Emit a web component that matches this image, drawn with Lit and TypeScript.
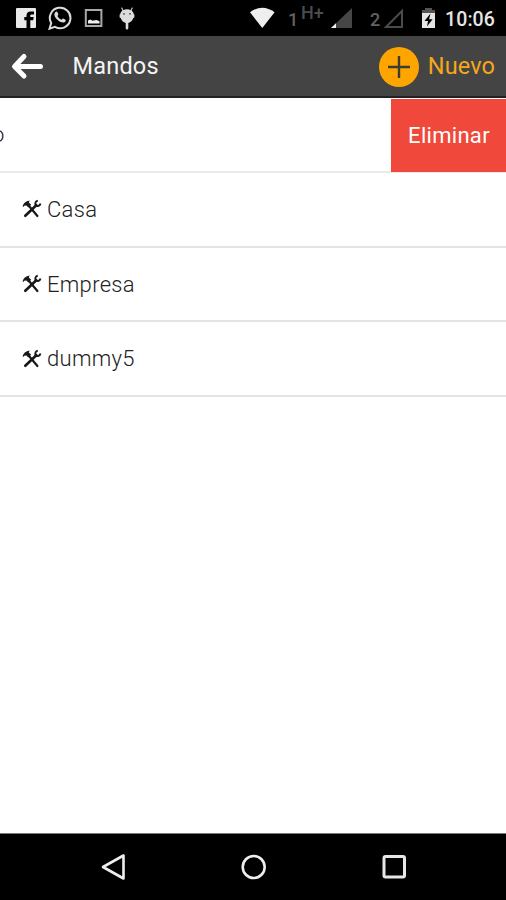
import { LitElement, html, css, svg } from "lit";
import { customElement, property } from "lit/decorators.js";

@customElement("status-bar")
class StatusBar extends LitElement {
  static styles = css`
    :host { display: flex; align-items: flex-start; justify-content: space-between; height: 36px; background: #000; color: #e6e6e6; flex: none; }
    .side { display: flex; height: 36px; }
    .left { padding-left: 16px; gap: 12px; }
    .right { padding-right: 11px; }
    svg { display: block; flex: none; height: 36px; }
    .sim { color: #626262; font-size: 18px; line-height: 20px; font-weight: 500; margin-top: 10px; width: 11px; }
    .net { color: #4c4c4c; font-size: 18px; line-height: 20px; font-weight: 500; margin: 3px 6px 0 2px; width: 24px; }
    .time { font-size: 19.5px; line-height: 24px; font-weight: 500; margin: 8px 0 0 8px; width: 50px; text-align: right; white-space: nowrap; letter-spacing: 0.1px; }
    .two { margin-left: 17px; width: 13px; }
  `;
  render() {
    return html`
      <div class="side left">
        <svg width="20" viewBox="0 0 20 36"><rect y="8" width="20" height="20" rx="1" fill="#e9e9e9"/><path d="M10.5 28V20.3H8.3V17h2.2v-1.6c0-2.8 1.6-4 4-4H18v3h-2.2c-1 0-1.5.4-1.5 1.4V17h3.4l-.5 3.3h-2.9V28z" fill="#000"/></svg>
        <svg width="24" viewBox="0 0 24 36"><path d="M1.5 28.7l1.7-5.6A10.3 10.3 0 1 1 7 26.9z" fill="none" stroke="#ddd" stroke-width="2"/><path d="M7.2 12.2c.7-.8 1.9-.8 2.2 0l.9 2.1c.2.7-.8 1.3-.9 1.8.6 1.5 2.3 3 4 3.7.7-.2 1.1-1.4 1.8-1.3l2.3 1.2c.6.5-.1 2-.9 2.5-1.8 1-4.3-.2-6-1.4-2-1.5-3.7-3.5-4.1-5.3-.2-1.4 0-2.5.7-3.3z" fill="#ddd"/></svg>
        <svg width="19" viewBox="0 0 19 36"><rect x="1.8" y="10" width="15.6" height="16" fill="none" stroke="#a8a8a8" stroke-width="2"/><path d="M4 23.5V20.5l2.500-1 2 1.300 4-.8 3 1.300v2.200z" fill="#eee"/></svg>
        <svg width="22" viewBox="0 0 22 36"><path d="M6.800 8l1.600 3.500M17.200 8l-1.600 3.500" stroke="#ccc" stroke-width="1.200" stroke-linecap="round"/><path d="M8 10.200c2.300-1.400 5.700-1.400 8 0 1.800 1.100 2.600 2.500 2.800 4l.6.300v3l-1.100.6c-.7 2.500-2.700 4.300-5 4.900v5.200a1.300 1.300 0 0 1-2.600 0V23c-2.300-.6-4.300-2.400-5-4.900l-1.100-.6v-3l.6-.3C5.400 12.700 6.200 11.300 8 10.200z" fill="#dcdcdc"/><circle cx="9" cy="13.800" r=".9" fill="#444"/><circle cx="15" cy="13.800" r=".9" fill="#444"/></svg>
      </div>
      <div class="side right">
        <svg width="38" viewBox="0 0 38 36"><path d="M0 12.300Q12.300 3 24.600 12.300L12.300 28z" fill="#eee"/></svg>
        <span class="sim">1</span><span class="net">H+</span>
        <svg width="22" viewBox="0 0 22 36"><path d="M21 8v20H0z" fill="#464646"/><path d="M5 23.300V28H0z" fill="#f2f2f2"/></svg>
        <span class="sim two">2</span>
        <svg width="22" viewBox="0 0 22 36"><path d="M19 11v16H3z" fill="none" stroke="#4b4b4b" stroke-width="2"/></svg>
        <svg width="32" viewBox="0 0 32 36"><path d="M17 10h3V8h7v2h3v4H17z" fill="#555"/><path d="M17 13h13v15H17z" fill="#e6e6e6"/><path d="M25.500 13.500l-6 7.500h3.500l-1 5.500 5.600-7.300h-3.500z" fill="#000"/></svg>
        <span class="time">10:06</span>
      </div>`;
  }
}

@customElement("remote-row")
class RemoteRow extends LitElement {
  @property() label = "";
  static styles = css`
    :host { display: flex; align-items: center; height: 74.7px; box-sizing: border-box; border-bottom: 2px solid #e4e4e4; padding: 0 0 0 22px; font-size: 22px; letter-spacing: 0.3px; color: #222; }
    svg { width: 20px; height: 20px; margin-right: 5px; display: block; }
    span { line-height: 26px; padding-top: 1px; font-weight: 300; }
  `;
  render() {
    return html`<svg viewBox="0 0 20 20">${svg`
      <path d="M3.300 16.800L14.300 6.200" stroke="#181818" stroke-width="2.600" stroke-linecap="round"/>
      <path d="M15.800 1.800c-2.200.3-3 2.300-2.200 4.600 2 1.300 4.300.5 4.900-1.900" fill="none" stroke="#181818" stroke-width="1.900"/>
      <path d="M6.200 6L15.400 17" stroke="#181818" stroke-width="2.200" stroke-linecap="round"/>
      <path d="M.6 7.300C1.400 4.600 3.500 2.300 7.700 1.600L6.800 3.500l2.400 2.200-2.800 2.700-2-2-2.200.3-.8 1.300z" fill="#181818"/>`}</svg><span>${this.label}</span>`;
  }
}

@customElement("app-root")
class AppRoot extends LitElement {
  static styles = css`
    :host { display: flex; flex-direction: column; height: 900px; background: #fff; overflow: hidden; font-family: Roboto, "Noto Sans", sans-serif; }
    header { display: flex; align-items: center; height: 62px; box-sizing: border-box; background: #444; border-bottom: 2px solid #222; padding: 0 11px; flex: none; }
    svg { display: block; flex: none; }
    h1 { margin: 0 auto 0 28.5px; font-size: 23.5px; line-height: 28px; font-weight: 400; letter-spacing: 0.2px; color: #f4f4f4; }
    .new { display: flex; align-items: center; gap: 9px; font-size: 23.5px; letter-spacing: 0.1px; color: #f5a71c; }
    .new svg { margin-top: 1px; }
    .open { display: flex; justify-content: space-between; height: 75px; box-sizing: border-box; border-bottom: 2px solid #eaeaea; flex: none; }
    .tail { width: 30px; margin-left: -8px; line-height: 74px; font-size: 22px; font-weight: 300; color: #222; }
    .delete { width: 115px; height: 73px; margin-top: 1px; line-height: 73px; text-align: center; background: #f0483b; color: #fff; font-size: 22px; letter-spacing: 0.3px; text-indent: 1px; }
    main { flex: 1; }
    nav { display: flex; height: 67px; background: #000; padding-left: 100px; box-sizing: border-box; align-items: center; gap: 114px; border-top: 1px solid #777; flex: none; }
  `;
  render() {
    return html`
      <status-bar></status-bar>
      <header>
        <svg width="33" height="28" viewBox="0 0 33 28"><path d="M13 4.500L3.500 14.500l9.500 9.500M4 14.500h25.500" fill="none" stroke="#fff" stroke-width="5" stroke-linecap="round" stroke-linejoin="round"/></svg>
        <h1>Mandos</h1>
        <div class="new"><svg width="40" height="40" viewBox="0 0 40 40"><circle cx="20" cy="20" r="20" fill="#ffa500"/><path d="M20 9v22M9 20h22" stroke="#3c3c34" stroke-width="2.400"/></svg><span>Nuevo</span></div>
      </header>
      <main>
        <div class="open"><span class="tail">o</span><div class="delete">Eliminar</div></div>
        ${["Casa", "Empresa", "dummy5"].map((n) => html`<remote-row .label=${n}></remote-row>`)}
      </main>
      <nav>
        <svg width="26" height="28" viewBox="0 0 26 28"><path d="M23.500 2.500v23L3 14z" fill="none" stroke="#eee" stroke-width="2.600" stroke-linejoin="round"/></svg>
        <svg width="27" height="28" viewBox="0 0 27 28"><circle cx="13.700" cy="14" r="11" fill="none" stroke="#eee" stroke-width="2.600"/></svg>
        <svg width="26" height="28" viewBox="0 0 26 28"><rect x="3" y="3.500" width="20.500" height="20.500" rx="1.500" fill="none" stroke="#e6e6e6" stroke-width="3"/></svg>
      </nav>`;
  }
}
